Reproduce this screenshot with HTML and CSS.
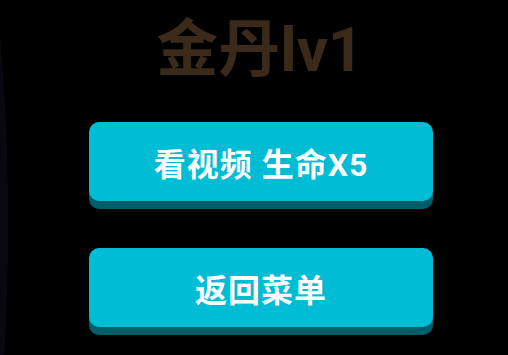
FILE: index.html
```html
<!DOCTYPE html>
<html lang="zh">
<head>
<meta charset="utf-8">
<link rel="stylesheet" href="styles.css">
</head>
<body>
<svg class="edge" width="12" height="355" viewBox="0 0 12 355" aria-hidden="true">
  <path d="M0 38 C4 80 7 130 8 190 C9 250 7 310 4 355 L0 355 Z" fill="#0a0710"/>
</svg>
<main class="screen">
  <h1 class="title">金丹lv1</h1>
  <div class="actions">
    <button class="btn">看视频 生命X5</button>
    <button class="btn">返回菜单</button>
  </div>
</main>
</body>
</html>
```
FILE: styles.css
```css
html, body {
  margin: 0;
  padding: 0;
  background: #000;
  width: 508px;
  height: 355px;
  overflow: hidden;
}
body {
  position: relative;
  font-family: Roboto, "Noto Sans CJK SC", sans-serif;
}
.edge {
  position: absolute;
  left: 0;
  top: 0;
}
.screen {
  display: flex;
  flex-direction: column;
  align-items: center;
}
.title {
  margin: 0;
  padding-top: 15px;
  font-size: 62px;
  line-height: 70px;
  font-weight: 700;
  color: #3b2a1a;
  margin-left: 12px;
}
.title-gap {
  display: inline-block;
}
.actions {
  margin-top: 37px;
  display: flex;
  flex-direction: column;
  gap: 47px;
  margin-left: 14px;
}
.btn {
  width: 344px;
  height: 79px;
  border: none;
  border-radius: 10px;
  background: #00bcd4;
  box-shadow: 0 8px 0 #005e68;
  color: #fff;
  font-family: Roboto, "Noto Sans CJK SC", sans-serif;
  font-size: 32px;
  font-weight: 700;
  letter-spacing: 1px;
  padding: 0;
}
```
